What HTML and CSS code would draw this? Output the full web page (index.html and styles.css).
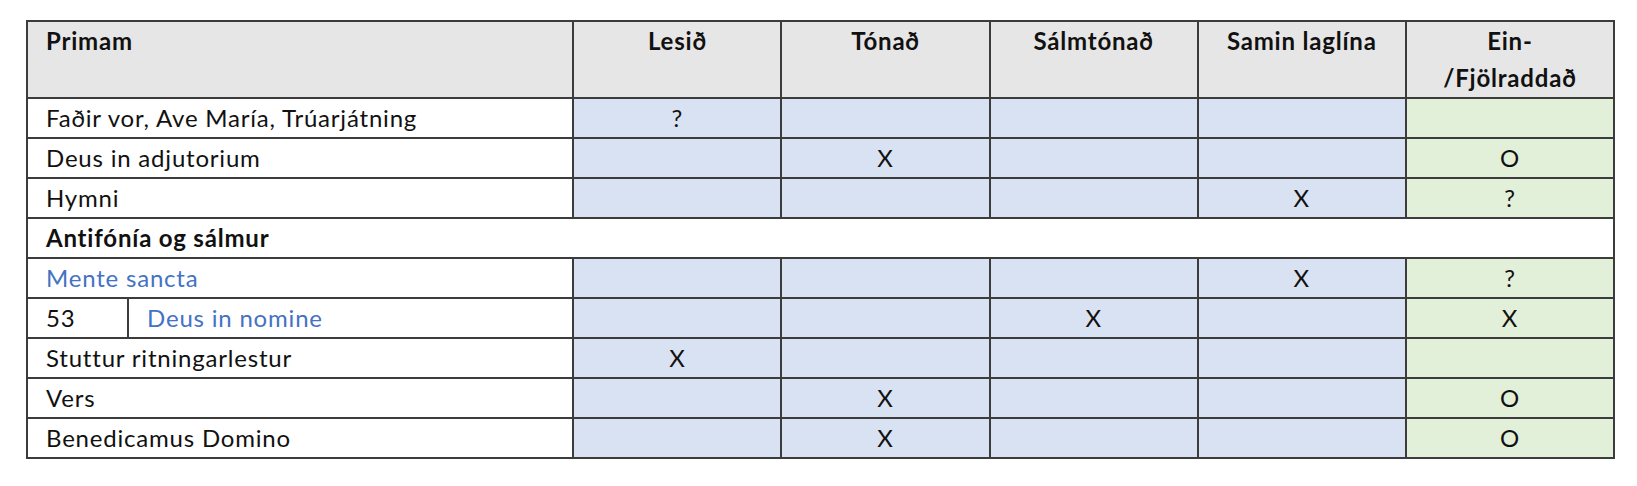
FILE: index.html
```html
<!DOCTYPE html>
<html lang="is">
<head>
<meta charset="utf-8">
<title>Primam</title>
<link rel="stylesheet" href="styles.css">
</head>
<body>
<table class="grid">
  <colgroup>
    <col class="c-num">
    <col class="c-name">
    <col class="c-val">
    <col class="c-val">
    <col class="c-val">
    <col class="c-val">
    <col class="c-val">
  </colgroup>
  <thead>
    <tr class="head">
      <th colspan="2" class="left">Primam</th>
      <th>Lesið</th>
      <th>Tónað</th>
      <th>Sálmtónað</th>
      <th>Samin laglína</th>
      <th>Ein-<br>/Fjölraddað</th>
    </tr>
  </thead>
  <tbody>
    <tr>
      <td colspan="2" class="name">Faðir vor, Ave María, Trúarjátning</td>
      <td class="b">?</td><td class="b"></td><td class="b"></td><td class="b"></td><td class="g"></td>
    </tr>
    <tr>
      <td colspan="2" class="name">Deus in adjutorium</td>
      <td class="b"></td><td class="b">X</td><td class="b"></td><td class="b"></td><td class="g">O</td>
    </tr>
    <tr>
      <td colspan="2" class="name">Hymni</td>
      <td class="b"></td><td class="b"></td><td class="b"></td><td class="b">X</td><td class="g">?</td>
    </tr>
    <tr>
      <td colspan="7" class="name section">Antifónía og sálmur</td>
    </tr>
    <tr>
      <td colspan="2" class="name link">Mente sancta</td>
      <td class="b"></td><td class="b"></td><td class="b"></td><td class="b">X</td><td class="g">?</td>
    </tr>
    <tr>
      <td class="name">53</td>
      <td class="name link">Deus in nomine</td>
      <td class="b"></td><td class="b"></td><td class="b">X</td><td class="b"></td><td class="g">X</td>
    </tr>
    <tr>
      <td colspan="2" class="name">Stuttur ritningarlestur</td>
      <td class="b">X</td><td class="b"></td><td class="b"></td><td class="b"></td><td class="g"></td>
    </tr>
    <tr>
      <td colspan="2" class="name">Vers</td>
      <td class="b"></td><td class="b">X</td><td class="b"></td><td class="b"></td><td class="g">O</td>
    </tr>
    <tr>
      <td colspan="2" class="name">Benedicamus Domino</td>
      <td class="b"></td><td class="b">X</td><td class="b"></td><td class="b"></td><td class="g">O</td>
    </tr>
  </tbody>
</table>
</body>
</html>
```

FILE: styles.css
```css
html, body {
  margin: 0;
  padding: 0;
  background: #ffffff;
}

body {
  font-family: Lato, "Liberation Sans", sans-serif;
  color: #111111;
}

.grid {
  margin: 20px 0 0 26px;
  border-collapse: collapse;
  table-layout: fixed;
  width: 1589px;
  font-size: 24px;
  letter-spacing: 0.8px;
}

.c-num { width: 101px; }
.c-name { width: 445px; }
.c-val { width: 208px; }

.grid th,
.grid td {
  border: 2px solid #3c3c3c;
  padding: 0 18px;
  height: 38px;
  line-height: 30px;
  text-align: center;
  vertical-align: middle;
  white-space: nowrap;
}

.head th {
  background: #e7e6e6;
  height: 75px;
  vertical-align: top;
  font-weight: bold;
  line-height: 37px;
  padding-top: 0;
}

.head th.left {
  text-align: left;
}

.grid td.name {
  text-align: left;
  background: #ffffff;
}

.grid td.section {
  font-weight: bold;
}

.grid td.link {
  color: #4472c4;
}

.grid td.b {
  background: #d9e2f3;
}

.grid td.g {
  background: #e2efd9;
}
```
